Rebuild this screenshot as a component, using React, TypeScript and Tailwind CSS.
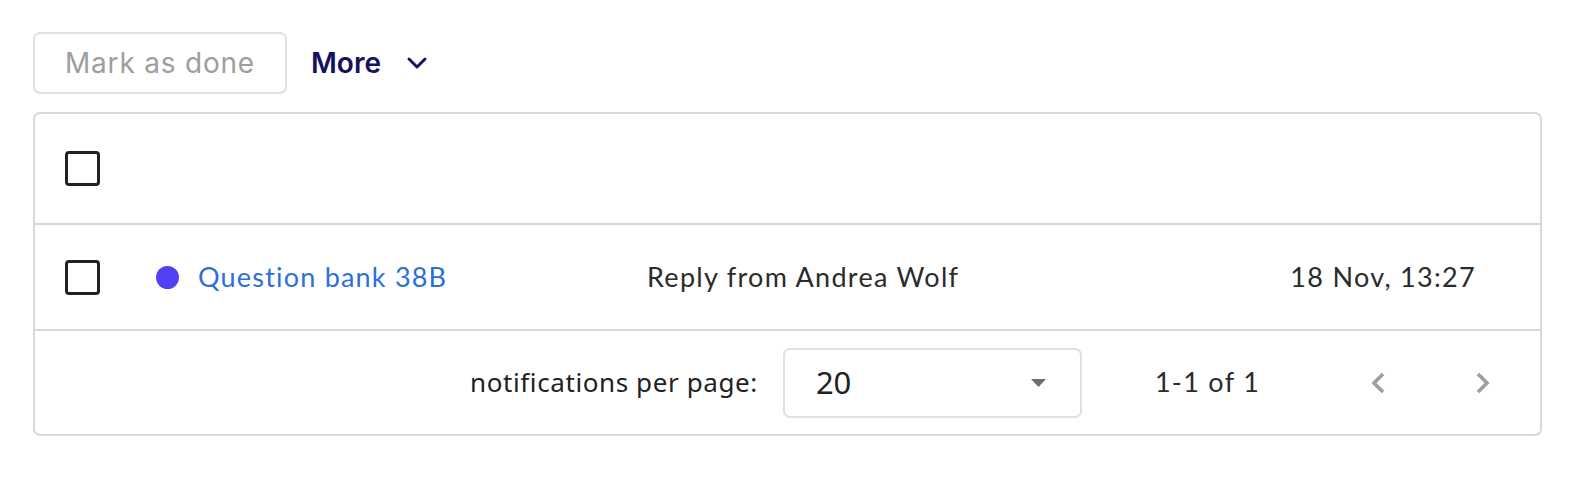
import { ChevronDown } from "lucide-react";

function Checkbox() {
  return (
    <span className="block h-[35px] w-[35px] shrink-0 rounded-[4px] border-[3px] border-[#222222] bg-white" />
  );
}

function Chevron({ dir }: { dir: "left" | "right" }) {
  const points = dir === "left" ? "13,2 4,11 13,20" : "3,2 12,11 3,20";
  return (
    <svg width="16" height="22" viewBox="0 0 16 22" className="shrink-0">
      <polyline points={points} fill="none" stroke="#9e9e9e" strokeWidth="3.6" />
    </svg>
  );
}

export default function App() {
  return (
    <div className="min-h-[480px] bg-white pl-[33px] pt-[32px] font-['Lato',sans-serif]">
      {/* Toolbar */}
      <div className="flex h-[62px] items-center">
        <button className="h-[62px] w-[254px] rounded-[7px] border-2 border-[#e0e0e0] bg-white font-['Inter',sans-serif] text-[28px] tracking-[0.8px] text-[#9e9e9e]">
          Mark as done
        </button>
        <button className="ml-[24px] flex items-center font-['Inter',sans-serif] text-[28px] font-semibold text-[#16105e]">
          More
          <ChevronDown className="ml-[20px] h-[32px] w-[32px]" strokeWidth={2.2} />
        </button>
      </div>

      {/* Table */}
      <div className="mt-[18px] w-[1509px] rounded-[7px] border-2 border-[#d6d8dc] text-[27px] tracking-[1.3px] text-[#2b2b2b]">
        <div className="flex h-[111px] items-center border-b-2 border-[#d6d8dc] pl-[30px]">
          <Checkbox />
        </div>

        <div className="flex h-[106px] items-center border-b-2 border-[#d6d8dc] pl-[30px]">
          <Checkbox />
          <span className="ml-[56px] h-[23px] w-[23px] shrink-0 rounded-full bg-[#5241f2]" />
          <a className="ml-[19px] w-[449px] tracking-[1.2px] text-[#2b6fd8]">Question bank 38B</a>
          <span>Reply from Andrea Wolf</span>
          <span className="ml-auto mr-[64px]">18 Nov, 13:27</span>
        </div>

        <div className="flex h-[103px] items-center pl-[435px]">
          <span className="font-['Noto_Sans',sans-serif] text-[26px] tracking-[0.6px] text-[#222222]">
            notifications per page:
          </span>
          <div className="ml-[25px] flex h-[70px] w-[299px] items-center rounded-[7px] border-2 border-[#e0e0e0] pl-[31px] pr-[34px]">
            <span className="font-['Noto_Sans',sans-serif] text-[31px] tracking-normal text-[#222222]">20</span>
            <svg className="ml-auto" width="15" height="8" viewBox="0 0 15 8">
              <path d="M0 0 L15 0 L7.5 8 Z" fill="#6e6e6e" />
            </svg>
          </div>
          <span className="ml-[73px]">1-1 of 1</span>
          <span className="ml-[110px] flex">
            <Chevron dir="left" />
          </span>
          <span className="ml-[89px] flex">
            <Chevron dir="right" />
          </span>
        </div>
      </div>
    </div>
  );
}
